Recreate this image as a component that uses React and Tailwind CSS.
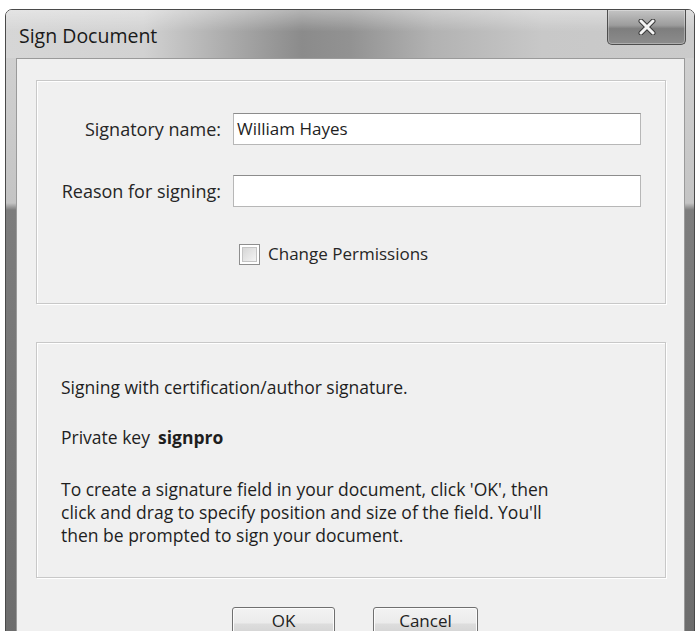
import React from "react";

const FieldRow = ({ label, value }) => (
  <>
    <label className="text-right text-[18px] leading-[32px] text-[#262626]">{label}</label>
    <div className="h-[32px] bg-white border border-[#b7b7b7] border-t-[#8c8c8c] pl-[3px] text-[17px] leading-[30px] text-[#1e1e1e]">
      {value}
    </div>
  </>
);

const TitleBar = () => (
  <div className="relative h-[48px] shrink-0 bg-[linear-gradient(90deg,#d6d6d6_0%,#d2d2d2_20%,#a6a6a6_34%,#8b8b8b_43%,#929292_50%,#b2b2b2_62%,#c8c8c8_78%,#cbcbcb_100%)]">
    <div className="absolute inset-0 bg-[linear-gradient(to_bottom,rgba(255,255,255,0.35),rgba(255,255,255,0)_45%,rgba(0,0,0,0)_100%)]" />
    <span className="absolute left-[13px] top-[12px] text-[19.5px] leading-[28px] text-[#1a1a1a]">Sign Document</span>
    <button className="absolute right-[8px] top-0 w-[79px] h-[35px] rounded-b-[5px] border border-t-0 border-[#4e4e4e] bg-[linear-gradient(to_bottom,#c4c4c4_0%,#9c9c9c_45%,#7e7e7e_55%,#8c8c8c_100%)] shadow-[inset_0_0_0_1px_rgba(255,255,255,0.3)] flex items-center justify-center">
      <svg width="18" height="16" viewBox="0 0 18 16">
        <path d="M3 2 L15 14 M15 2 L3 14" stroke="#3a3a3a" strokeWidth="5" strokeLinecap="round" />
        <path d="M3 2 L15 14 M15 2 L3 14" stroke="#f4f4f4" strokeWidth="3" strokeLinecap="round" />
      </svg>
    </button>
  </div>
);

const Button = ({ children, w }) => (
  <button
    className={`${w} h-[33px] shrink-0 rounded-[3px] border border-[#707070] bg-[linear-gradient(to_bottom,#f3f3f3_0%,#ebebeb_48%,#dddddd_52%,#cfcfcf_100%)] shadow-[inset_0_0_0_1px_#fcfcfc] text-[17px] text-[#222] flex justify-center items-start pt-[3px]`}
  >
    <span className="leading-[20px]">{children}</span>
  </button>
);

export default function App() {
  return (
    <div className="w-[698px] h-[631px] overflow-hidden bg-white pt-[9px] pl-[5px] font-['Open_Sans','Liberation_Sans',sans-serif]">
      <div className="w-[690px] h-[660px] flex flex-col rounded-t-[7px] border border-[#4a4a4a] overflow-hidden">
        <TitleBar />
        <div className="flex flex-1">
          <div className="w-[10px] bg-[linear-gradient(to_bottom,#d0d0d0_0px,#c4c4c4_145px,#7d7d7d_152px,#6c6c6c_100%)]" />
          <div className="w-[669px] border border-[#9a9a9a] bg-[#f0f0f0] pt-[21px] pl-[19px]">
            {/* signer details */}
            <div className="w-[630px] h-[224px] border border-[#c8c8c8] shadow-[inset_1px_1px_0_#ffffff,1px_1px_0_#ffffff] pt-[32px]">
              <div className="grid grid-cols-[184px_408px] gap-x-[12px] gap-y-[30px] items-center">
                <FieldRow label="Signatory name:" value="William Hayes" />
                <FieldRow label="Reason for signing:" value="" />
              </div>
              <div className="flex items-center gap-[8px] pl-[202px] mt-[36px]">
                <div className="w-[21px] h-[21px] border border-[#8e8e8e] bg-white p-[2px]">
                  <div className="w-full h-full border border-[#c4c4c4] bg-[linear-gradient(135deg,#d6d6d6,#f4f4f4)]" />
                </div>
                <span className="text-[17px] leading-[22px] text-[#262626]">Change Permissions</span>
              </div>
            </div>

            {/* signature info */}
            <div className="mt-[38px] w-[630px] h-[236px] border border-[#c8c8c8] shadow-[inset_1px_1px_0_#ffffff,1px_1px_0_#ffffff] pt-[33px] pl-[24px] text-[17.5px] leading-[23px] text-[#1e1e1e]">
              <p>Signing with certification/author signature.</p>
              <p className="mt-[27px]">
                Private key<span className="ml-[8px] font-bold">signpro</span>
              </p>
              <p className="mt-[29px]">
                To create a signature field in your document, click 'OK', then
                <br />
                click and drag to specify position and size of the field. You'll
                <br />
                then be prompted to sign your document.
              </p>
            </div>

            <div className="flex gap-[38px] pl-[196px] mt-[29px]">
              <Button w="w-[103px]">OK</Button>
              <Button w="w-[105px]">Cancel</Button>
            </div>
          </div>
          <div className="flex-1 bg-[linear-gradient(to_bottom,#d0d0d0_0px,#c4c4c4_145px,#7d7d7d_152px,#6c6c6c_100%)]" />
        </div>
      </div>
    </div>
  );
}
